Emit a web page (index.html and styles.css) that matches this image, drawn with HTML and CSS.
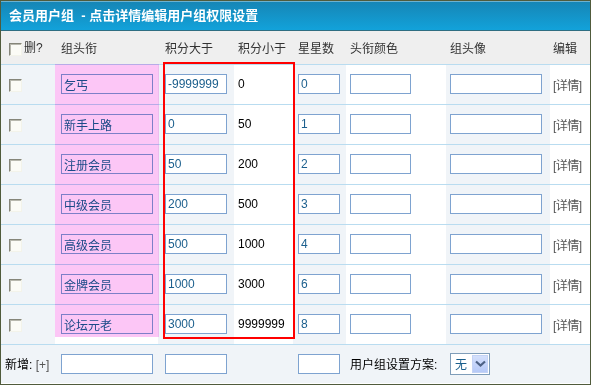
FILE: index.html
```html
<!DOCTYPE html>
<html>
<head lang="zh">
    <meta charset="UTF-8">
    <title>会员用户组</title>
    <link rel="stylesheet" href="styles.css">
</head>
<body>
<div id="panel">
    <div class="title">会员用户组 &nbsp;- 点击详情编辑用户组权限设置</div>
    <div class="wrap">
        <table id="groups">
            <tr class="head">
                <td class="c1"><span class="chk"></span>删?</td>
                <td class="c2">组头衔</td>
                <td class="c3">积分大于</td>
                <td class="c4">积分小于</td>
                <td class="c5">星星数</td>
                <td class="c6">头衔颜色</td>
                <td class="c7">组头像</td>
                <td class="c8">编辑</td>
            </tr>
            <tr>
                <td class="c1"><span class="chk"></span></td>
                <td class="c2"><input class="t-name" value="乞丐"></td>
                <td class="c3"><input class="t-min" value="-9999999"></td>
                <td class="c4">0</td>
                <td class="c5"><input class="t-star" value="0"></td>
                <td class="c6"><input class="t-color" value=""></td>
                <td class="c7"><input class="t-avatar" value=""></td>
                <td class="c8"><a>[详情]</a></td>
            </tr>
            <tr>
                <td class="c1"><span class="chk"></span></td>
                <td class="c2"><input class="t-name" value="新手上路"></td>
                <td class="c3"><input class="t-min" value="0"></td>
                <td class="c4">50</td>
                <td class="c5"><input class="t-star" value="1"></td>
                <td class="c6"><input class="t-color" value=""></td>
                <td class="c7"><input class="t-avatar" value=""></td>
                <td class="c8"><a>[详情]</a></td>
            </tr>
            <tr>
                <td class="c1"><span class="chk"></span></td>
                <td class="c2"><input class="t-name" value="注册会员"></td>
                <td class="c3"><input class="t-min" value="50"></td>
                <td class="c4">200</td>
                <td class="c5"><input class="t-star" value="2"></td>
                <td class="c6"><input class="t-color" value=""></td>
                <td class="c7"><input class="t-avatar" value=""></td>
                <td class="c8"><a>[详情]</a></td>
            </tr>
            <tr>
                <td class="c1"><span class="chk"></span></td>
                <td class="c2"><input class="t-name" value="中级会员"></td>
                <td class="c3"><input class="t-min" value="200"></td>
                <td class="c4">500</td>
                <td class="c5"><input class="t-star" value="3"></td>
                <td class="c6"><input class="t-color" value=""></td>
                <td class="c7"><input class="t-avatar" value=""></td>
                <td class="c8"><a>[详情]</a></td>
            </tr>
            <tr>
                <td class="c1"><span class="chk"></span></td>
                <td class="c2"><input class="t-name" value="高级会员"></td>
                <td class="c3"><input class="t-min" value="500"></td>
                <td class="c4">1000</td>
                <td class="c5"><input class="t-star" value="4"></td>
                <td class="c6"><input class="t-color" value=""></td>
                <td class="c7"><input class="t-avatar" value=""></td>
                <td class="c8"><a>[详情]</a></td>
            </tr>
            <tr>
                <td class="c1"><span class="chk"></span></td>
                <td class="c2"><input class="t-name" value="金牌会员"></td>
                <td class="c3"><input class="t-min" value="1000"></td>
                <td class="c4">3000</td>
                <td class="c5"><input class="t-star" value="6"></td>
                <td class="c6"><input class="t-color" value=""></td>
                <td class="c7"><input class="t-avatar" value=""></td>
                <td class="c8"><a>[详情]</a></td>
            </tr>
            <tr>
                <td class="c1"><span class="chk"></span></td>
                <td class="c2"><input class="t-name" value="论坛元老"></td>
                <td class="c3"><input class="t-min" value="3000"></td>
                <td class="c4">9999999</td>
                <td class="c5"><input class="t-star" value="8"></td>
                <td class="c6"><input class="t-color" value=""></td>
                <td class="c7"><input class="t-avatar" value=""></td>
                <td class="c8"><a>[详情]</a></td>
            </tr>
            <tr class="foot">
                <td class="c1">新增: <a class="add">[+]</a></td>
                <td class="c2"><input class="t-name" value=""></td>
                <td class="c3"><input class="t-min" value=""></td>
                <td class="c4"></td>
                <td class="c5"><input class="t-star" value=""></td>
                <td class="c6">用户组设置方案:</td>
                <td class="c7" colspan="2">
                    <span class="sel"><span class="sel-val">无</span><span class="sel-btn"><svg width="11" height="7" viewBox="0 0 11 7"><path d="M1 1.5 L5.5 5.5 L10 1.5" fill="none" stroke="#4d6185" stroke-width="2.2"/></svg></span></span>
                </td>
            </tr>
        </table>
        <!-- 标注 -->
        <div class="mark-pink"></div>
        <div class="mark-red"></div>
    </div>
</div>
</body>
</html>
```

FILE: styles.css
```css
*{padding: 0;margin: 0;box-sizing: border-box;}
body{font: 12px "Liberation Sans", "Noto Sans CJK SC", sans-serif;color: #222;background: #fff;}
#panel{width: 591px;height: 385px;border: 1px solid #505b3c;}
.title{height: 30px;line-height: 28px;padding-left: 8px;color: #fff;font-weight: bold;font-size: 13px;border-top: 1px solid #6cb2d0;border-bottom: 1px solid #2f6e82;background: linear-gradient(#1686b6, #12a2da);}
.wrap{position: relative;}
#groups{width: 589px;border-collapse: collapse;table-layout: fixed;}
#groups td{height: 40px;padding: 0 0 0 4px;border-top: 1px solid #b9dcf0;text-align: left;vertical-align: middle;white-space: nowrap;}
#groups .head td{height: 33px;border-top: 0;background: #efefef;color: #333;}
#groups .foot td{height: 39px;background: #f0f4f8;}
.c1{width: 54px;background: #f0f4f8;padding-left: 8px !important;}
.c2{width: 103px;background: #fff;padding-left: 6px !important;}
.c3{width: 76px;background: #f0f4f8;padding-left: 7px !important;}
.c4{width: 59px;background: #fff;color: #000;}
.c5{width: 53px;background: #f0f4f8;padding-left: 5px !important;}
.c6{width: 100px;background: #fff;}
.c7{width: 104px;background: #f0f4f8;}
.c8{width: 40px;background: #fff;padding-left: 3px !important;}
.c8 a{color: #555;letter-spacing: -0.5px;}
.foot .c1{padding-left: 4px !important;color: #000;}
.foot .c6{color: #000;}
.add{color: #555;}
.chk{display: inline-block;width: 13px;height: 13px;vertical-align: -4px;margin-right: 2px;border: 1px solid;border-color: #858579 #f3f3ea #f3f3ea #858579;box-shadow: inset 1px 1px 0 #b8b8ae;background: #fbfbf6;}
input{height: 20px;border: 1px solid #7ea3d0;background: #fff;color: #1b5f8d;font: 12px "Liberation Sans", "Noto Sans CJK SC", sans-serif;padding: 0 2px;outline: none;vertical-align: middle;}
.t-name{width: 92px;}
.t-min{width: 62px;}
.t-star{width: 42px;}
.t-color{width: 61px;}
.t-avatar{width: 92px;}
.sel{display: inline-flex;align-items: center;width: 40px;height: 22px;border: 1px solid #7f9db9;background: #fff;padding: 1px;vertical-align: middle;}
.sel-val{flex: 1;padding-left: 3px;color: #1b5f8d;font-size: 12px;}
.sel-btn{width: 16px;height: 18px;display: flex;align-items: center;justify-content: center;background: linear-gradient(#d4e0fc, #b6c9f7);border: 1px solid #c4d3f5;}
.mark-pink{position: absolute;left: 54px;top: 33px;width: 104px;height: 273px;background: #fcc6f6;mix-blend-mode: multiply;pointer-events: none;}
.mark-red{position: absolute;left: 162px;top: 31px;width: 132px;height: 277px;border: 2px solid #f00;pointer-events: none;}
```
